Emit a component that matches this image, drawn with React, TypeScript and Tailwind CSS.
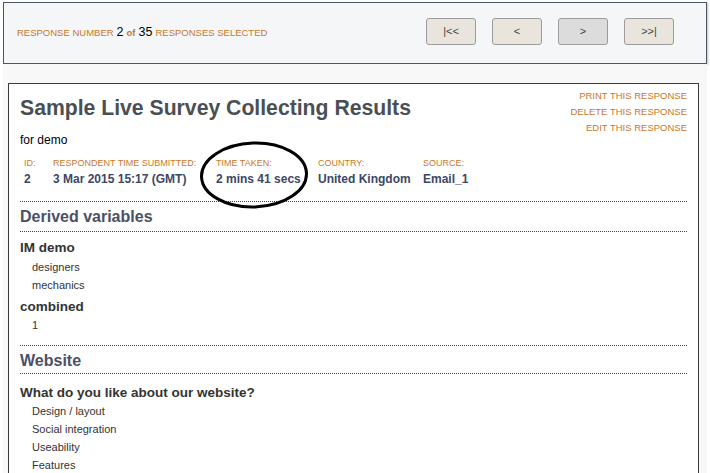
const orange = "text-[#c8782c]";

function NavButton({ label, active }: { label: string; active?: boolean }) {
  return (
    <button
      className={`h-[27px] w-[50px] rounded-[3px] border border-[#9c9c9c] text-[11px] text-[#444] ${
        active ? "bg-[#dcdcdc]" : "bg-[#e9e5dc]"
      }`}
    >
      {label}
    </button>
  );
}

function Dotted() {
  return <div className="border-t border-dotted border-[#444]" />;
}

const meta = [
  { label: "ID:", value: "2" },
  { label: "RESPONDENT TIME SUBMITTED:", value: "3 Mar 2015 15:17 (GMT)" },
  { label: "TIME TAKEN:", value: "2 mins 41 secs" },
  { label: "COUNTRY:", value: "United Kingdom" },
  { label: "SOURCE:", value: "Email_1" },
];

export default function App() {
  return (
    <div
      className="relative h-[473px] w-[710px] overflow-hidden bg-white"
      style={{ fontFamily: '"Liberation Sans", Arial, sans-serif' }}
    >
      {/* selection bar */}
      <div className="mx-[3px] mt-[2px] flex h-[62px] items-start justify-between border border-[#4b5563] bg-[#f5f6f8] pl-[13px] pr-[32px] pt-[15px] shadow-[1px_1px_2px_rgba(0,0,0,0.25)]">
        <div className={`mt-[6px] flex items-baseline gap-[3px] text-[9.5px] leading-[16px] ${orange}`}>
          <span>RESPONSE NUMBER</span>
          <span className="text-[12.5px] text-black">2</span>
          <span className="font-bold">of</span>
          <span className="text-[12.5px] text-black">35</span>
          <span>RESPONSES SELECTED</span>
        </div>
        <div className="flex gap-[16px]">
          <NavButton label="|<<" />
          <NavButton label="<" />
          <NavButton label=">" active />
          <NavButton label=">>|" />
        </div>
      </div>

      {/* page body */}
      <div className="mx-[3px] h-full bg-[#f8f8f8] pl-[5px] pt-[19px]">
        <div className="h-full w-[691px] border border-[#3a3a3a] bg-white pl-[11px] pr-[11px]">
          <div className="flex items-start justify-between">
            <div>
              <h1 className="mt-[12px] text-[21.2px] font-bold leading-[24px] text-[#4a4f55]">
                Sample Live Survey Collecting Results
              </h1>
              <p className="mt-[13px] text-[12px] leading-[14px] text-black">for demo</p>
            </div>
            <div className={`mt-[4px] flex flex-col items-end text-[9.5px] leading-[16px] ${orange}`}>
              <span>PRINT THIS RESPONSE</span>
              <span>DELETE THIS RESPONSE</span>
              <span>EDIT THIS RESPONSE</span>
            </div>
          </div>

          <div className="mt-[9px] grid grid-cols-[29px_163px_102px_105px_auto] pl-[4px]">
            {meta.map((m) => (
              <div key={m.label}>
                <div className={`text-[9px] leading-[14px] ${orange}`}>{m.label}</div>
                <div className="text-[12px] font-bold leading-[18px] text-[#3d4766]">{m.value}</div>
              </div>
            ))}
          </div>

          <div className="mt-[13px]">
            <Dotted />
          </div>
          <h2 className="py-[5px] text-[16px] font-bold leading-[19px] text-[#4b5066]">Derived variables</h2>
          <Dotted />

          <h3 className="mt-[7px] text-[13.5px] font-bold leading-[17px] text-[#333]">IM demo</h3>
          <div className="mt-[2px] pl-[12px] text-[11px] leading-[18px] text-[#333]">
            <div>designers</div>
            <div>mechanics</div>
          </div>
          <h3 className="mt-[4px] text-[13.5px] font-bold leading-[17px] text-[#333]">combined</h3>
          <div className="mt-[1px] pl-[12px] text-[11px] leading-[18px] text-[#333]">1</div>

          <div className="mt-[11px]">
            <Dotted />
          </div>
          <h2 className="pb-[3px] pt-[5px] text-[16px] font-bold leading-[19px] text-[#4b5066]">Website</h2>
          <Dotted />

          <h3 className="mt-[10px] text-[13.5px] font-bold leading-[17px] text-[#333]">
            What do you like about our website?
          </h3>
          <div className="mt-[1px] pl-[12px] text-[11px] leading-[18px] text-[#333]">
            <div>Design / layout</div>
            <div>Social integration</div>
            <div>Useability</div>
            <div>Features</div>
          </div>
        </div>
      </div>

      {/* hand-drawn annotation circle */}
      <svg className="absolute left-[198px] top-[140px]" width="114" height="70" viewBox="0 0 114 70">
        <ellipse cx="56" cy="35" rx="52.5" ry="32" fill="none" stroke="#000" strokeWidth="3" transform="rotate(-2 56 35)" />
      </svg>
    </div>
  );
}
